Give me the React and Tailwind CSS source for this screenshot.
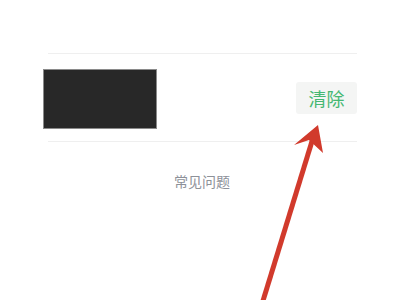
export default function App () {
  return (
    <div className="relative w-[400px] h-[300px] overflow-hidden bg-white" style={{ fontFamily: '"Noto Sans CJK SC", "Noto Sans", sans-serif' }}>
      <div className="pt-[53px]">
        <div className="ml-[48px] mr-[43px] h-px bg-[#efefef]" />
        <div className="flex items-start justify-between pl-[43px] pr-[43px] pt-[15px] h-[87px]">
          <div className="w-[114px] h-[60px] bg-[#282828] border border-[#8a8a8a]" />
          <button className="mt-[13px] w-[61px] h-[32px] rounded-[3px] bg-[#f4f5f4] text-[18px] leading-none text-[#45b872]">清除</button>
        </div>
        <div className="ml-[48px] mr-[43px] h-px bg-[#efefef]" />
        <div className="pt-[29px] pl-[4px] text-center text-[14px] leading-[20px] text-[#8d9199]">常见问题</div>
      </div>
      <svg className="absolute left-0 top-0" width="400" height="300" viewBox="0 0 400 300">
        <line x1="262" y1="304" x2="313" y2="138" stroke="#d13a2c" strokeWidth="5" />
        <polygon points="318,125 294,145 309,140 323,153" fill="#d13a2c" />
      </svg>
    </div>
  );
}
